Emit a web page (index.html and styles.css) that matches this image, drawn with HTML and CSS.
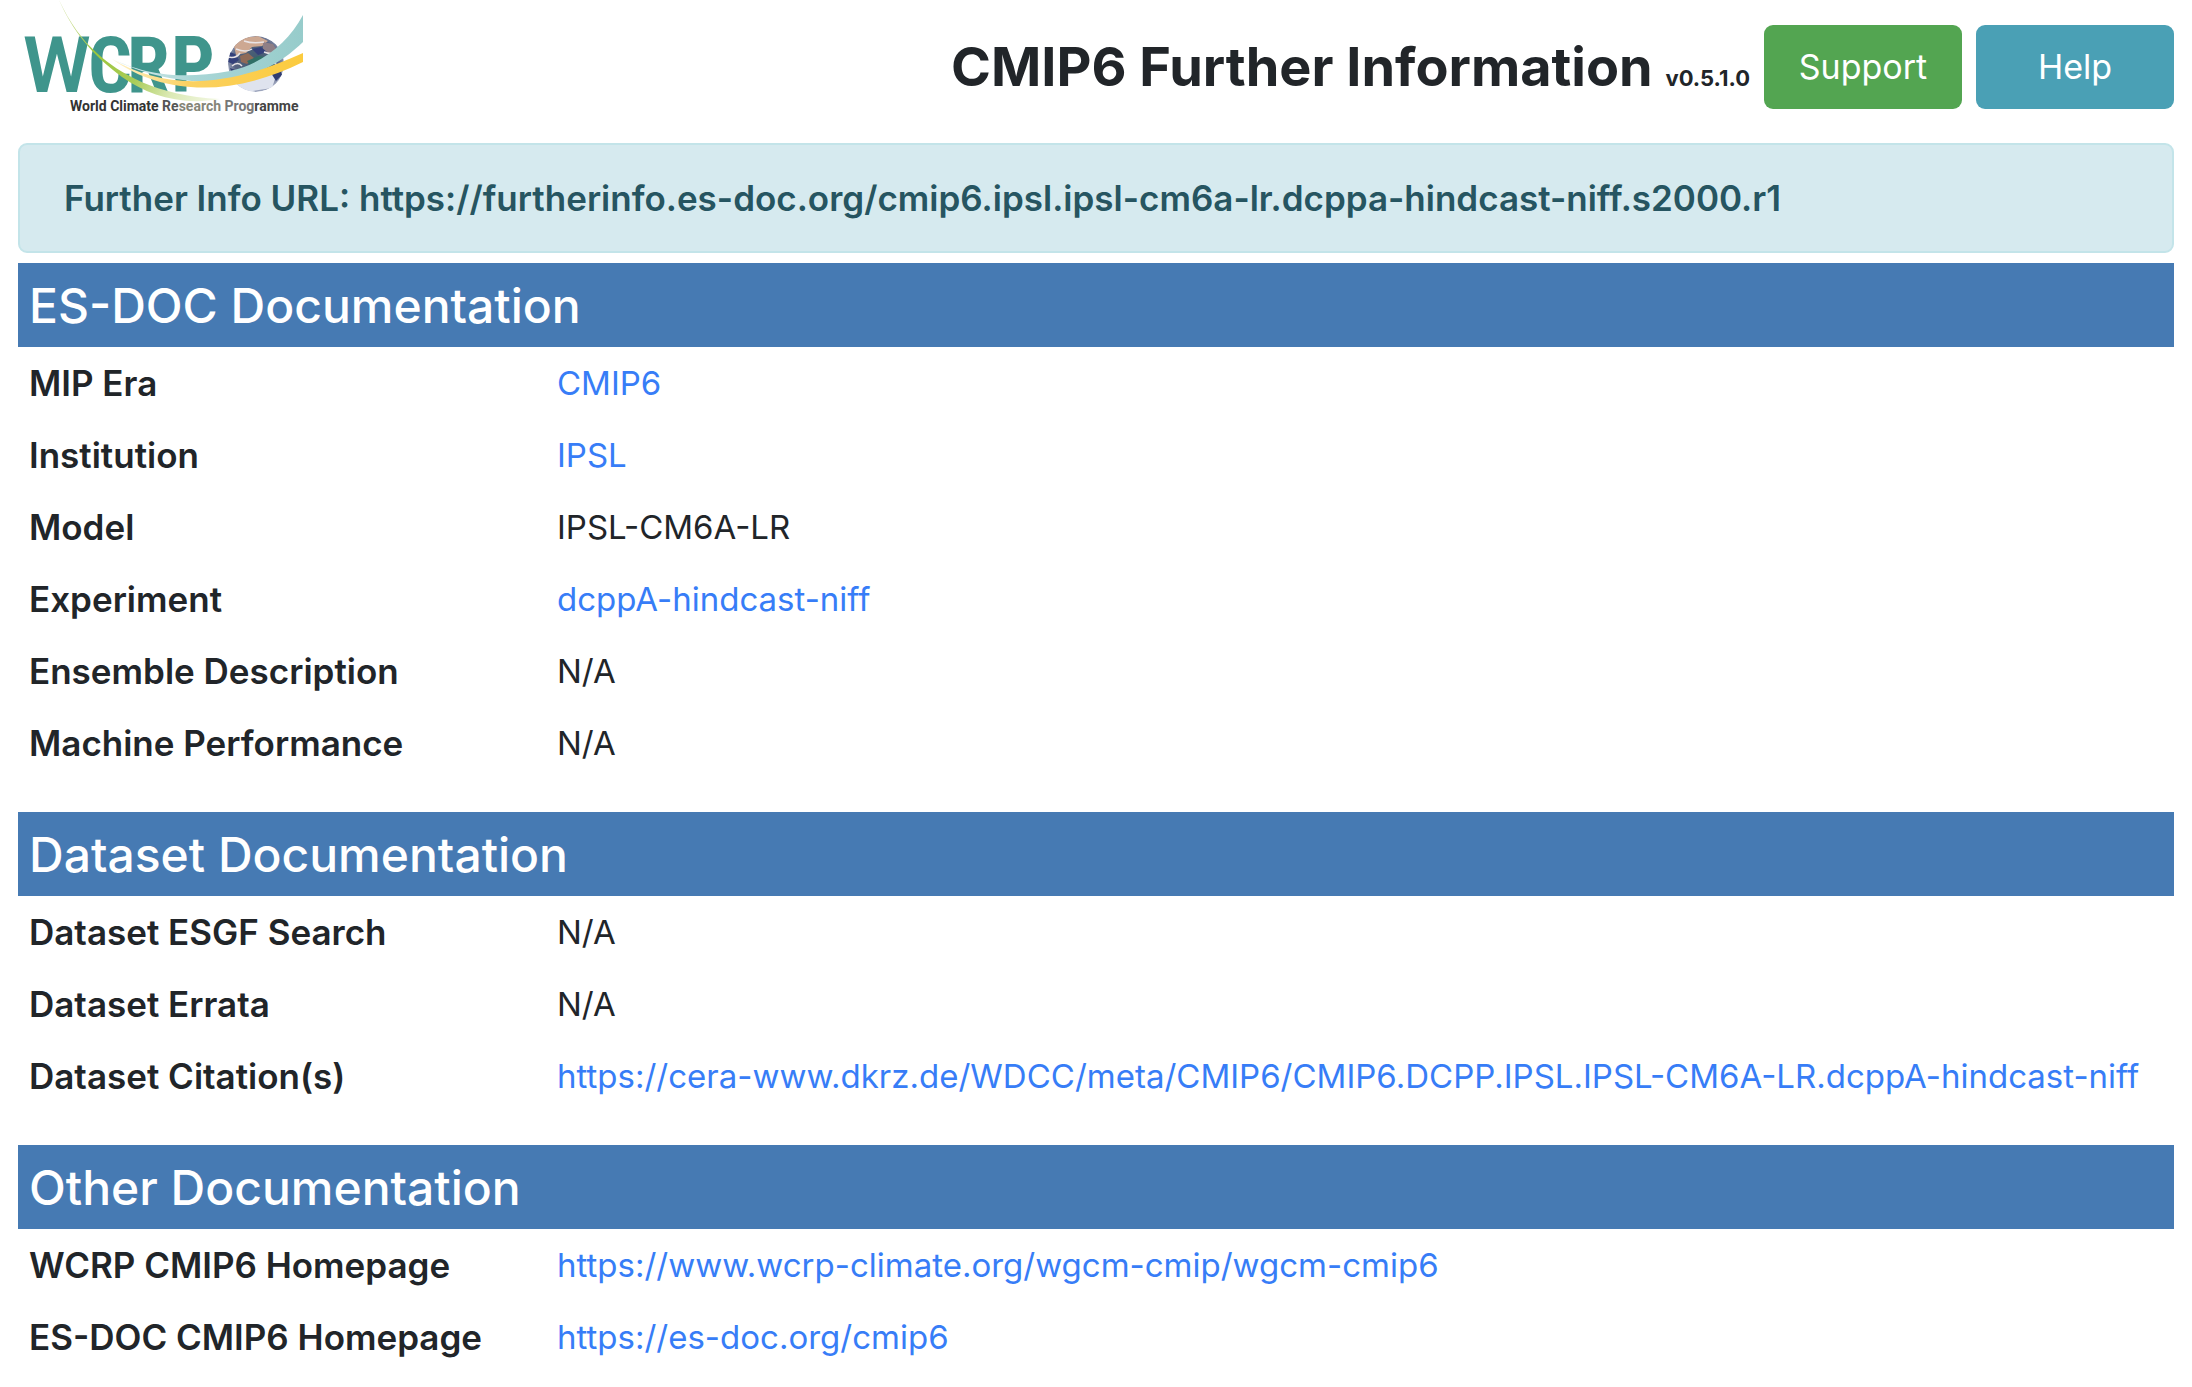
FILE: index.html
```html
<!DOCTYPE html>
<html lang="en">
<head>
<meta charset="utf-8">
<meta name="viewport" content="width=device-width, initial-scale=1">
<title>CMIP6 Further Information</title>
<link rel="stylesheet" href="styles.css">
</head>
<body>
<header class="page-header">
  <svg class="logo" viewBox="0 0 304 118" role="img" aria-label="World Climate Research Programme">
    <defs>
      <linearGradient id="green" x1="60" y1="0" x2="225" y2="95" gradientUnits="userSpaceOnUse">
        <stop offset="0" stop-color="#d5e3a8"/>
        <stop offset="0.3" stop-color="#9dc63b"/>
        <stop offset="0.55" stop-color="#a9cc58"/>
        <stop offset="0.75" stop-color="#dbe9b4"/>
        <stop offset="1" stop-color="#f5f9e8"/>
      </linearGradient>
      <linearGradient id="teal" x1="100" y1="0" x2="303" y2="0" gradientUnits="userSpaceOnUse">
        <stop offset="0" stop-color="#e6f3f4"/>
        <stop offset="0.45" stop-color="#a9d6d6"/>
        <stop offset="1" stop-color="#97cccb"/>
      </linearGradient>
      <linearGradient id="gold" x1="110" y1="0" x2="303" y2="0" gradientUnits="userSpaceOnUse">
        <stop offset="0" stop-color="#fff3cc"/>
        <stop offset="0.4" stop-color="#fbd162"/>
        <stop offset="1" stop-color="#fbcb3e"/>
      </linearGradient>
      <radialGradient id="globe" cx="0.5" cy="0.45" r="0.55">
        <stop offset="0" stop-color="#3f5b6c"/>
        <stop offset="0.7" stop-color="#566282"/>
        <stop offset="1" stop-color="#a5adc4"/>
      </radialGradient>
      <clipPath id="disc"><circle cx="256" cy="64" r="28"/></clipPath>
    </defs>
    <text class="logo-name" y="92"><tspan class="logo-wide" x="23">W</tspan><tspan x="88 127 171">CRP</tspan></text>
    <g clip-path="url(#disc)">
      <circle cx="256" cy="64" r="28" fill="url(#globe)"/>
      <path d="M234 46l8-8 16-2 10 5-6 5-10 1-6 6-10 2z" fill="#cda892"/>
      <path d="M263 42l10 2 5 8-8 2-7-4z" fill="#8f7f86"/>
      <path d="M240 56l8-3 6 5-7 6-6-2z" fill="#8f6a58"/>
      <path d="M247 61l12-5 12 2 4 6-10 4-12 1z" fill="#2f6f66"/>
      <path d="M230 52l5 2 4 6-6 4-5-2zM252 49l9-2 6 5-9 3z" fill="#34407a"/>
      <path d="M228 57q8 2 12-4M232 66q6-5 10 0M264 52q8 3 12 0M274 63q5 4 9 2M236 49q10 4 16 0M244 41q9 3 20 1" fill="none" stroke="#e9e4e6" stroke-width="1.5"/>
      <path d="M247 74q3-7 10-5 5 3 10 0 4 5 9 7l-4 12-32 5-8-9z" fill="#dfe3ee"/>
      <path d="M230 68l8 3 5 8-8 2z" fill="#303c70"/>
      <path d="M271 73l9-4 2 6-6 6z" fill="#303c70"/>
    </g>
    <path d="M59 0C70 23 82 40 98 54C118 72 155 96 220 99C180 106 148 95 122 77C92 55 72 30 59 0Z" fill="url(#green)"/>
    <path d="M108 57C135 70 170 82 230 71C262 64 288 43 303 15V42C290 55 262 76 230 80C180 86 138 72 108 57Z" fill="url(#teal)"/>
    <path d="M112 59C165 90 225 89 303 53V62C235 96 165 97 112 59Z" fill="url(#gold)"/>
    <text class="logo-caption" x="70" y="111"><tspan fill="#333">World Climate </tspan><tspan fill="#555">Re</tspan><tspan fill="#858577">search </tspan><tspan fill="#777">Prog</tspan><tspan fill="#444">ramme</tspan></text>
  </svg>
  <div class="header-tools">
    <h1 class="title">CMIP6 Further Information <small class="version">v0.5.1.0</small></h1>
    <button type="button" class="button button-support">Support</button>
    <button type="button" class="button button-help">Help</button>
  </div>
</header>

<main>
  <p class="further-url">Further Info URL: https://furtherinfo.es-doc.org/cmip6.ipsl.ipsl-cm6a-lr.dcppa-hindcast-niff.s2000.r1</p>

  <section class="group">
    <h2 class="group-title">ES-DOC Documentation</h2>
    <table class="facts">
      <tr><th scope="row">MIP Era</th><td><a href="#">CMIP6</a></td></tr>
      <tr><th scope="row">Institution</th><td><a href="#">IPSL</a></td></tr>
      <tr><th scope="row">Model</th><td>IPSL-CM6A-LR</td></tr>
      <tr><th scope="row">Experiment</th><td><a href="#">dcppA-hindcast-niff</a></td></tr>
      <tr><th scope="row">Ensemble Description</th><td>N/A</td></tr>
      <tr><th scope="row">Machine Performance</th><td>N/A</td></tr>
    </table>
  </section>

  <section class="group">
    <h2 class="group-title">Dataset Documentation</h2>
    <table class="facts">
      <tr><th scope="row">Dataset ESGF Search</th><td>N/A</td></tr>
      <tr><th scope="row">Dataset Errata</th><td>N/A</td></tr>
      <tr><th scope="row">Dataset Citation(s)</th><td><a href="https://cera-www.dkrz.de/WDCC/meta/CMIP6/CMIP6.DCPP.IPSL.IPSL-CM6A-LR.dcppA-hindcast-niff">https://cera-www.dkrz.de/WDCC/meta/CMIP6/CMIP6.DCPP.IPSL.IPSL-CM6A-LR.dcppA-hindcast-niff</a></td></tr>
    </table>
  </section>

  <section class="group">
    <h2 class="group-title">Other Documentation</h2>
    <table class="facts">
      <tr><th scope="row">WCRP CMIP6 Homepage</th><td><a href="https://www.wcrp-climate.org/wgcm-cmip/wgcm-cmip6">https://www.wcrp-climate.org/wgcm-cmip/wgcm-cmip6</a></td></tr>
      <tr><th scope="row">ES-DOC CMIP6 Homepage</th><td><a href="https://es-doc.org/cmip6">https://es-doc.org/cmip6</a></td></tr>
    </table>
  </section>
</main>
</body>
</html>
```
FILE: styles.css
```css
* {
  box-sizing: border-box;
}

body {
  margin: 0;
  background: #fff;
  color: #212529;
  font-family: Inter, "Liberation Sans", sans-serif;
  font-size: 34px;
  line-height: 54px;
}

.page-header {
  display: flex;
  justify-content: space-between;
  padding-right: 18px;
  margin-bottom: 25px;
}

.logo {
  flex: none;
  width: 304px;
  height: 118px;
}

.logo-name {
  fill: #3f958c;
  font: bold 77px "Liberation Sans Narrow", "Roboto Condensed", Roboto, sans-serif;
}

.logo-wide {
  font-family: Roboto, sans-serif;
  font-weight: 600;
}

.logo-caption {
  font: 700 14px Roboto, sans-serif;
}

.header-tools {
  display: flex;
  align-items: center;
  gap: 14px;
  padding-top: 16px;
}

.title {
  margin: 0;
  padding-top: 10px;
  font-size: 54px;
  font-weight: 700;
}

.version {
  font-size: 22px;
}

.button {
  width: 198px;
  height: 84px;
  border: 0;
  border-radius: 9px;
  color: #fff;
  font: inherit;
}

.button-support {
  background: #53a551;
}

.button-help {
  background: #4aa0b5;
}

main {
  padding: 0 18px;
}

.further-url {
  margin: 0 0 10px;
  padding: 26px 44px;
  border: 2px solid #c3e4e9;
  border-radius: 9px;
  background: #d6eaef;
  color: #265561;
  font-size: 35px;
  font-weight: 600;
}

.group {
  margin-bottom: 33px;
}

.group:last-child {
  margin-bottom: 0;
}

.group-title {
  margin: 0;
  padding: 16px 11px 14px;
  background: #467ab3;
  color: #fff;
  font-size: 48px;
  font-weight: 500;
}

.facts {
  width: 100%;
  border-collapse: collapse;
}

.facts th,
.facts td {
  padding: 9px 11px;
  text-align: left;
}

.facts th {
  width: 528px;
  font-size: 35px;
  font-weight: 600;
}

.facts td {
  font-size: 33px;
}

.facts a {
  color: #377df7;
  text-decoration: none;
}
```
